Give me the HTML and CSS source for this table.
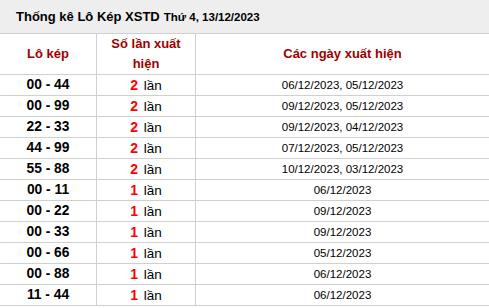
FILE: index.html
```html
<!DOCTYPE html>
<html lang="vi">
<head>
<meta charset="utf-8">
<link rel="stylesheet" href="styles.css">
</head>
<body>
<div class="title"><span class="main">Thống kê Lô Kép XSTD</span> <span class="sub">Thứ 4, 13/12/2023</span></div>
<table class="stats">
  <thead>
    <tr><th class="c1">Lô kép</th><th class="c2">Số lần xuất hiện</th><th class="c3">Các ngày xuất hiện</th></tr>
  </thead>
  <tbody>
    <tr><td class="pair">00 - 44</td><td class="cnt"><b>2</b> lần</td><td class="dates">06/12/2023, 05/12/2023</td></tr>
    <tr><td class="pair">00 - 99</td><td class="cnt"><b>2</b> lần</td><td class="dates">09/12/2023, 05/12/2023</td></tr>
    <tr><td class="pair">22 - 33</td><td class="cnt"><b>2</b> lần</td><td class="dates">09/12/2023, 04/12/2023</td></tr>
    <tr><td class="pair">44 - 99</td><td class="cnt"><b>2</b> lần</td><td class="dates">07/12/2023, 05/12/2023</td></tr>
    <tr><td class="pair">55 - 88</td><td class="cnt"><b>2</b> lần</td><td class="dates">10/12/2023, 03/12/2023</td></tr>
    <tr><td class="pair">00 - 11</td><td class="cnt"><b>1</b> lần</td><td class="dates">06/12/2023</td></tr>
    <tr><td class="pair">00 - 22</td><td class="cnt"><b>1</b> lần</td><td class="dates">09/12/2023</td></tr>
    <tr><td class="pair">00 - 33</td><td class="cnt"><b>1</b> lần</td><td class="dates">09/12/2023</td></tr>
    <tr><td class="pair">00 - 66</td><td class="cnt"><b>1</b> lần</td><td class="dates">05/12/2023</td></tr>
    <tr><td class="pair">00 - 88</td><td class="cnt"><b>1</b> lần</td><td class="dates">06/12/2023</td></tr>
    <tr><td class="pair">11 - 44</td><td class="cnt"><b>1</b> lần</td><td class="dates">06/12/2023</td></tr>
  </tbody>
</table>
</body>
</html>
```
FILE: styles.css
```css
html, body {
  margin: 0;
  padding: 0;
  background: #fff;
  font-family: "Liberation Sans", Arial, sans-serif;
  color: #000;
}
.title {
  height: 33px;
  background: #eeeeee;
  padding-left: 16px;
  box-sizing: border-box;
  display: flex;
  align-items: center;
  gap: 4px;
  font-weight: bold;
}
.title .main { font-size: 13px; }
.title .sub { font-size: 11.5px; }
.stats {
  width: 489px;
  border-collapse: collapse;
  table-layout: fixed;
}
.stats th, .stats td {
  border: 1px solid #d0d0d0;
  padding: 0;
  text-align: center;
}
.stats tr > :first-child { border-left: none; }
.stats tr > :last-child { border-right: none; }
.stats th {
  height: 40px;
  line-height: 20px;
  font-size: 13px;
  font-weight: bold;
  color: #a00000;
}
.stats .c1 { width: 96px; }
.stats .c2 { width: 70px; padding: 0 14px; }
.stats td {
  height: 20px;
  line-height: 16px;
  padding: 0;
}
.pair {
  font-weight: bold;
  font-size: 13.8px;
}
.cnt {
  font-size: 13.5px;
}
.cnt b {
  color: #ff0000;
  font-size: 14px;
  margin-right: 2px;
}
.dates {
  font-size: 11.5px;
}
```
